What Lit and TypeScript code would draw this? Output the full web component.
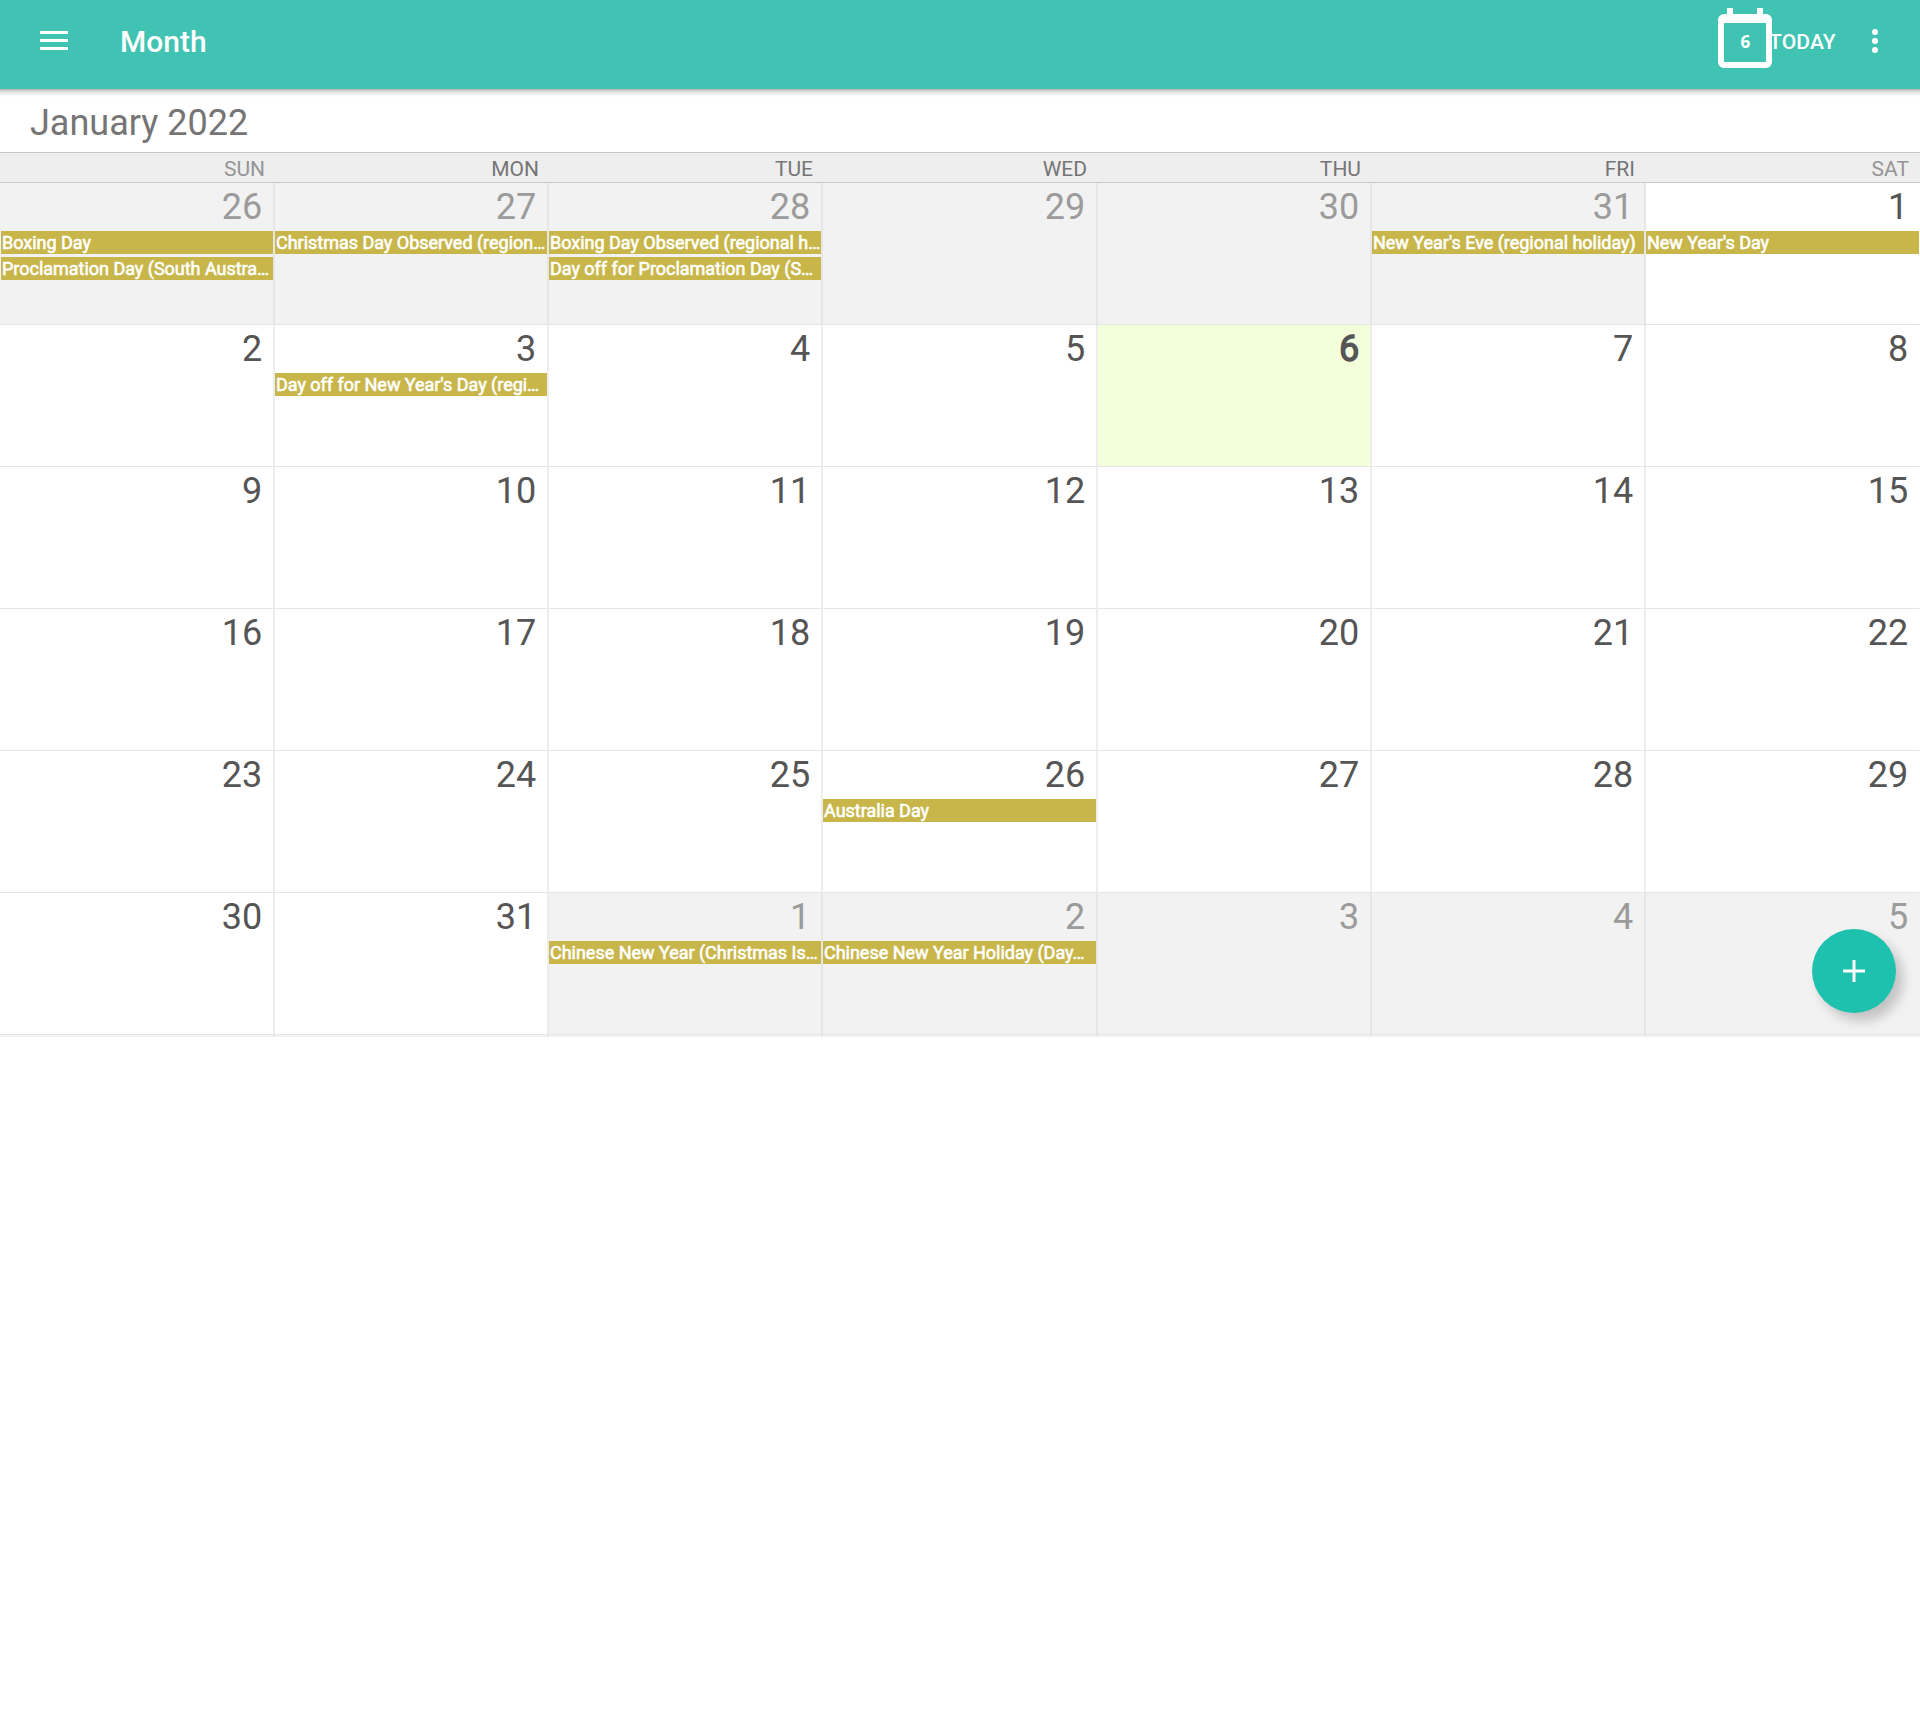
import { LitElement, html, css, svg, nothing } from "lit";
import { customElement, property } from "lit/decorators.js";
import { classMap } from "lit/directives/class-map.js";

interface Day {
  n: number;
  other?: boolean;
  today?: boolean;
  events: string[];
}

const WEEKDAYS = ["SUN", "MON", "TUE", "WED", "THU", "FRI", "SAT"];

const EVENTS: Record<number, string[]> = {
  0: ["Boxing Day", "Proclamation Day (South Austra…"],
  1: ["Christmas Day Observed (region…"],
  2: ["Boxing Day Observed (regional h…", "Day off for Proclamation Day (S…"],
  5: ["New Year's Eve (regional holiday)"],
  6: ["New Year's Day"],
  8: ["Day off for New Year's Day (regi…"],
  31: ["Australia Day"],
  37: ["Chinese New Year (Christmas Is…"],
  38: ["Chinese New Year Holiday (Day…"],
};

const DAYS: Day[] = Array.from({ length: 42 }, (_, i) => {
  const date = new Date(2021, 11, 26 + i);
  return {
    n: date.getDate(),
    other: date.getMonth() !== 0,
    today: date.getMonth() === 0 && date.getDate() === 6,
    events: EVENTS[i] ?? [],
  };
});

@customElement("month-day")
class MonthDay extends LitElement {
  @property({ attribute: false }) day!: Day;

  static styles = css`
    :host { display: block; min-width: 0; }
    .cell { height: 100%; box-sizing: border-box; background: #fff; color: #555; }
    .other { background: #f2f2f2; color: #9b9b9b; }
    .today { background: #f2ffda; }
    .num {
      height: 48px; padding: 3px 10.7px 0 0; box-sizing: border-box;
      font-size: 36px; line-height: 42px; text-align: right;
    }
    .today .num { -webkit-text-stroke: 1.3px #555; }
    .event {
      height: 23px; margin-bottom: 3px; padding-left: 1px; box-sizing: border-box;
      background: #c8b64a; color: #fff; font-size: 18px; line-height: 23px; letter-spacing: -0.02px;
      -webkit-text-stroke: 0.6px #fff; white-space: nowrap; overflow: hidden;
    }
  `;

  render() {
    const d = this.day;
    return html`<div class=${classMap({ cell: true, other: !!d.other, today: !!d.today })}>
      <div class="num">${d.n}</div>
      ${d.events.length ? d.events.map((e) => html`<div class="event">${e}</div>`) : nothing}
    </div>`;
  }
}

@customElement("app-root")
export class AppRoot extends LitElement {
  static styles = css`
    :host {
      display: block; position: relative; width: 1920px; height: 1733px; overflow: hidden;
      background: #fff; font-family: Roboto, "Liberation Sans", sans-serif;
    }
    .bar {
      height: 89px; box-sizing: border-box; padding: 0 42px 7px 40px;
      display: flex; align-items: center; background: #41c3b3; color: #fff;
    }
    .menu { display: block; width: 28px; height: 19px; margin-top: -1px; }
    .title { margin-left: 52px; padding-top: 1px; font-size: 30px; font-weight: 500; line-height: 36px; }
    .spacer { flex: 1; }
    .cal { display: block; width: 54px; height: 60px; margin-top: -6px; }
    .cal-num { font: 700 17px "Open Sans", sans-serif; }
    .today { padding-top: 1px; font-size: 21px; font-weight: 500; line-height: 24px; width: 69px; margin-left: -3px; letter-spacing: 0.15px; white-space: nowrap; }
    .more { display: block; width: 6px; height: 24px; margin-left: 34px; }
    .month {
      height: 63px; box-sizing: border-box; padding: 13px 0 0 30px;
      font-size: 36px; line-height: 42px; color: #757575;
      background: linear-gradient(rgba(0, 0, 0, 0.3), rgba(0, 0, 0, 0.11) 3px, rgba(0, 0, 0, 0) 8px);
    }
    .week {
      display: grid; grid-template-columns: repeat(7, 274px);
      height: 31px; box-sizing: border-box; background: #eee;
      border-top: 1px solid #c9c9c9; border-bottom: 1px solid #c9c9c9;
    }
    .wd { padding: 3px 9px 0 0; text-align: right; font-size: 21px; line-height: 26px; color: #757575; }
    .weekend { color: #959595; }
    .grid {
      display: grid; grid-template-columns: 275px 274px 274px 275px 274px 274px 274px;
      grid-template-rows: repeat(6, 142px) 2px;
    }
    .slot { border-right: 2px solid #ededed; border-bottom: 1px solid #e5e5e5; }
    .slot.dim { border-right-color: #e6e6e6; }
    .slot.first { padding-left: 1px; background: #fff; }
    .slot.first.dim { background: #f2f2f2; }
    .slot.last { border-right: 1px solid #fff; }
    .slot.last.dim { border-right-color: #f2f2f2; }
    .foot { background: #f2f2f2; border-right: 2px solid #e6e6e6; }
    .foot:last-child { border-right: 0; }
    .fab {
      position: absolute; left: 1812px; top: 929px; width: 84px; height: 84px; border-radius: 50%;
      display: flex; align-items: center; justify-content: center; background: #1dc1ae;
      box-shadow: 7px 8px 12px rgba(0, 0, 0, 0.2);
    }
    .plus { width: 22px; height: 22px; }
  `;

  render() {
    return html`
      <header class="bar">
        <svg class="menu" viewBox="0 0 28 19" fill="#fff">
          ${[0, 8, 16].map((y) => svg`<rect y=${y} width="28" height="3"></rect>`)}
        </svg>
        <div class="title">Month</div>
        <div class="spacer"></div>
        <svg class="cal" viewBox="0 0 54 60" fill="#fff">
          <path fill-rule="evenodd" d="M9 0h6v6h24V0h6v6h3a6 6 0 0 1 6 6v42a6 6 0 0 1-6 6H6a6 6 0 0 1-6-6V12a6 6 0 0 1 6-6h3zM6 15v39h42V15z"></path>
          <text class="cal-num" x="27.4" y="40" text-anchor="middle">6</text>
        </svg>
        <div class="today">TODAY</div>
        <svg class="more" viewBox="0 0 6 24" fill="#fff">
          ${[3, 12, 21].map((y) => svg`<circle cx="3" cy=${y} r="3"></circle>`)}
        </svg>
      </header>
      <div class="month">January 2022</div>
      <div class="week">
        ${WEEKDAYS.map((w, i) => html`<div class=${classMap({ wd: true, weekend: i % 6 === 0 })}>${w}</div>`)}
      </div>
      <main class="grid">
        ${DAYS.map((d, i) => html`<month-day
          class=${classMap({ slot: true, dim: !!d.other, first: i % 7 === 0, last: i % 7 === 6 })}
          .day=${d}></month-day>`)}
        ${WEEKDAYS.map(() => html`<div class="foot"></div>`)}
      </main>
      <div class="fab">
        <svg class="plus" viewBox="0 0 22 22" fill="#fff">
          <path d="M9.5 0h3v9.5H22v3h-9.500V22h-3v-9.500H0v-3h9.500z"></path>
        </svg>
      </div>
    `;
  }
}
